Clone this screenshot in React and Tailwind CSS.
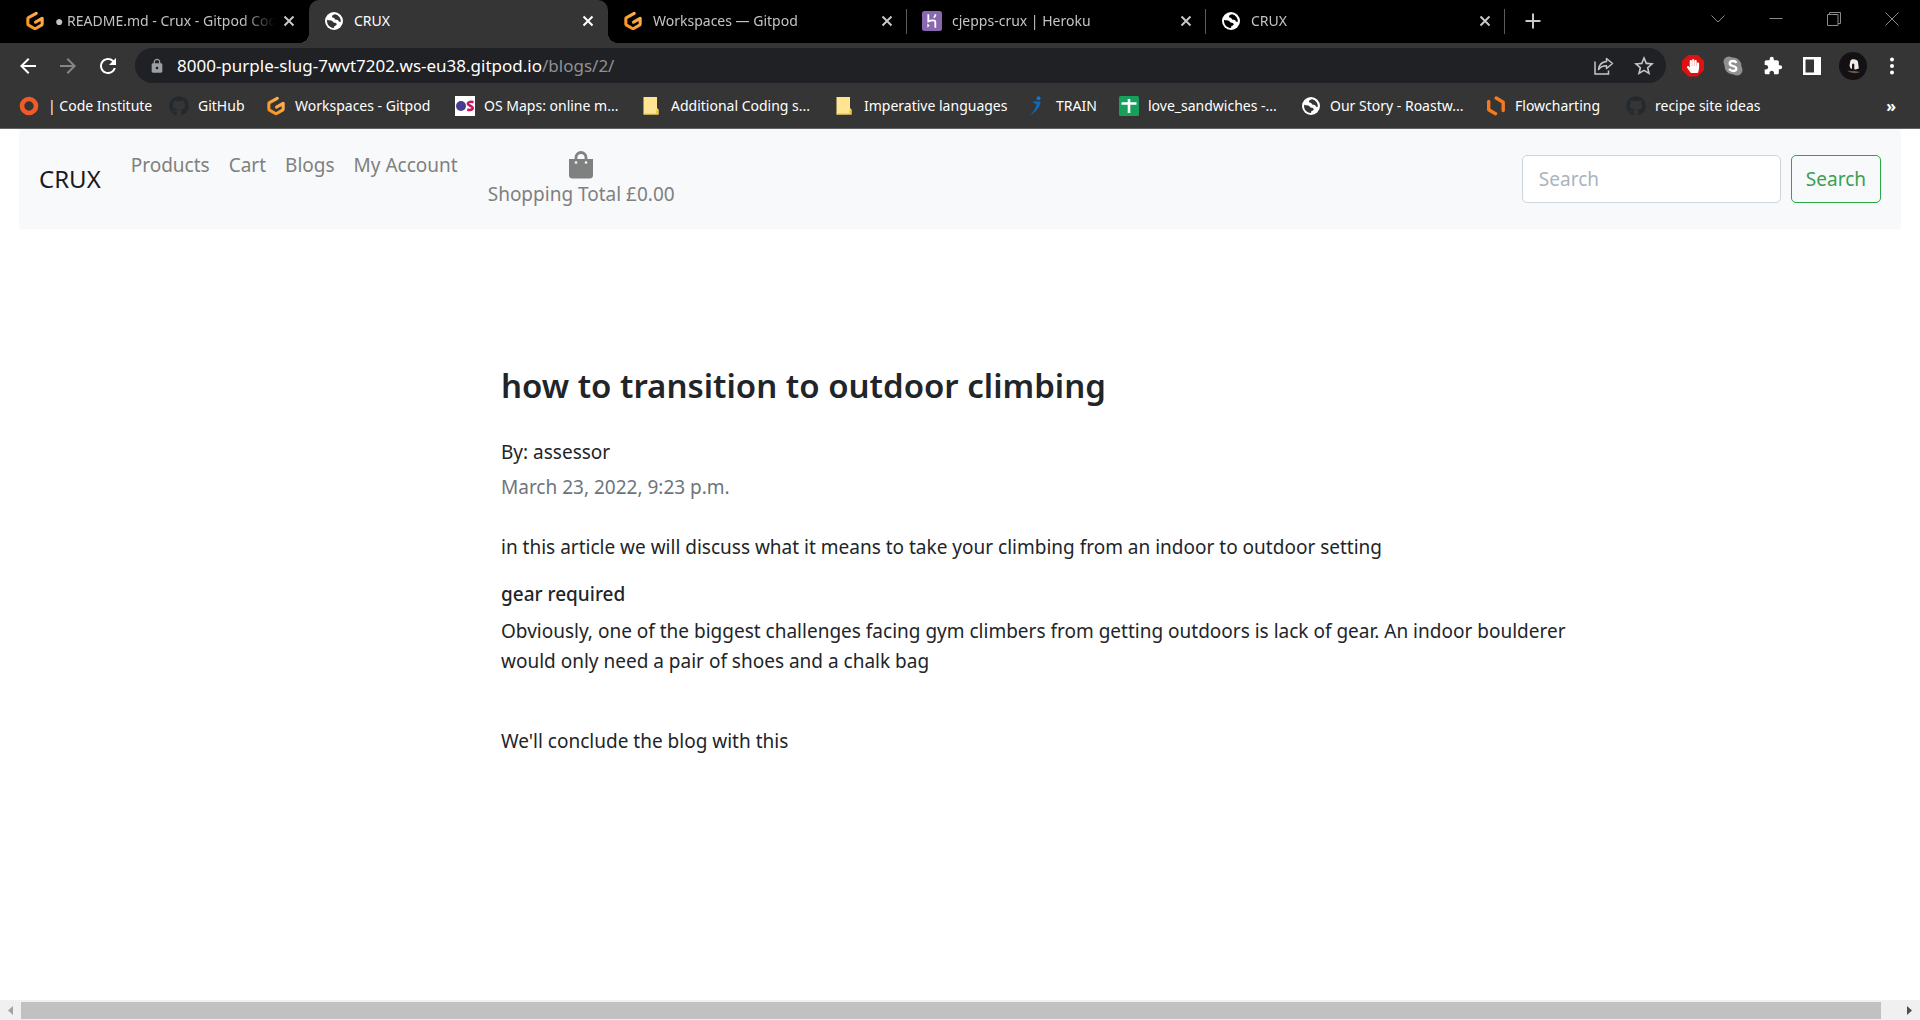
import React from "react";
import { FaGithub, FaHandPaper } from "react-icons/fa";
import { MdLock, MdRefresh, MdExtension, MdStarOutline, MdArrowBack, MdArrowForward } from "react-icons/md";

const Gitpod = () => (
  <svg viewBox="0 0 24 24" className="size-5">
    <defs>
      <linearGradient id="gp" x1="1" y1="0" x2="0" y2="1">
        <stop offset="0" stopColor="#ffb45b" />
        <stop offset="1" stopColor="#f98f1c" />
      </linearGradient>
    </defs>
    <path d="M13.500 2.800 4.200 8a1.600 1.600 0 0 0-.8 1.400v6.200c0 .6.3 1.100.8 1.400l7 4c.5.3 1.100.3 1.600 0l7-4c.5-.3.8-.8.8-1.400V8.800l-8 4.600" fill="none" stroke="url(#gp)" strokeWidth="3.700" strokeLinecap="round" strokeLinejoin="round" />
  </svg>
);

const Globe = ({ sea = "#353535" }) => (
  <svg viewBox="0 0 20 20" className="size-5">
    <circle cx="10" cy="10" r="9" fill="#fff" />
    <path
      d="M11.200 3.300c-1.500.2-3.200.9-3.200 2.200 0 .9.9 1.200 1.700 1.300.9.200.8 1.100 1.500 1.700.8.600 2.100.1 2.900.7.700.5.500 1.500 1.300 1.600h1.500c0-3.400-2-6.500-5.700-7.500zM3.100 8.700c-.5 3.200.9 6.100 3.800 7.600 1.200.6 2.400.7 3.400.5-.4-.7-.2-1.300.5-1.700.8-.5 1.900-.8 1.900-1.800 0-1.200-1.300-1.500-2.200-1.600-1.300-.1-1.600-.9-2.400-1.700-1.200-1.200-3.300-.2-5-1.300z"
      fill={sea}
    />
  </svg>
);

const DarkGlobe = () => <Globe sea="#000" />;

const Heroku = () => (
  <svg viewBox="0 0 20 20" className="size-5">
    <rect width="20" height="20" rx="2.500" fill="#8a68b0" />
    <path d="M6.300 3.300v7c2.200-.9 7-2 7 .7v5.700M13.500 3.300c0 1.300-.6 2.400-1.600 3.400" fill="none" stroke="#fff" strokeWidth="1.800" />
    <path d="M5.400 12.500v4.200l2.300-2.100z" fill="#fff" />
  </svg>
);

const CodeInstitute = () => (
  <svg viewBox="0 0 20 20" className="size-5">
    <circle cx="10" cy="10" r="7" fill="none" stroke="#f05a28" strokeWidth="4.600" />
  </svg>
);

const OsMaps = () => (
  <svg viewBox="0 0 20 20" className="size-5">
    <rect width="20" height="20" fill="#fff" />
    <circle cx="6" cy="10" r="5" fill="#453c90" />
    <path d="M18.500 6.200c-3.500-1.200-6 .2-5.500 2 .5 1.600 4.500 1.600 4.700 3.600.2 1.900-2.700 2.700-5.500 1.700" fill="none" stroke="#c8175a" strokeWidth="2.600" />
  </svg>
);

const Folder = () => (
  <svg viewBox="0 0 20 20" className="size-5">
    <path d="M1.500 1H15v11l1.500 1.500V18.500h-15z" fill="#ffe592" />
    <path d="M14 18.500v-4l1.500-1.500 1 1v4.500z" fill="#f3c83f" />
    <path d="M1.500 17.500h12v1h-12z" fill="#efc64a" />
  </svg>
);

const Train = () => (
  <svg viewBox="0 0 20 20" className="size-5">
    <circle cx="11.500" cy="2.200" r="2" fill="#1475cf" />
    <path d="M5 6c3.500-1 6.500-1 8.500 0-.5 4.500-4 9.500-10.500 13.500 3.500-4 6-7.500 6.500-11.300C8 7.500 6.800 6.900 5 6z" fill="#1268b8" />
  </svg>
);

const Sheets = () => (
  <svg viewBox="0 0 20 20" className="size-5">
    <rect width="20" height="20" rx="1.500" fill="#16a05c" />
    <path d="M2.500 7.500h15M10 3v14" stroke="#fff" strokeWidth="2.600" />
  </svg>
);

const Lucid = () => (
  <svg viewBox="0 0 20 20" className="size-5">
    <path d="M2.700 5.500v8.200l6.800 4M10.200 2l7 4.200v8.300" fill="none" stroke="#f47a20" strokeWidth="3.400" strokeLinejoin="round" strokeLinecap="round" />
  </svg>
);

const Octocat = () => <FaGithub className="size-5 text-[#24292e]" />;

const Close = ({ color = "text-[#c8c8c8]" }) => (
  <svg viewBox="0 0 12 12" className={"size-3 " + color}>
    <path d="m1.500 1.500 9 9m0-9-9 9" stroke="currentColor" strokeWidth="2" />
  </svg>
);

const tabs = [
  { title: "● README.md - Crux - Gitpod Code", Icon: Gitpod },
  { title: "CRUX", Icon: Globe, active: true },
  { title: "Workspaces — Gitpod", Icon: Gitpod, rule: true },
  { title: "cjepps-crux | Heroku", Icon: Heroku, rule: true },
  { title: "CRUX", Icon: DarkGlobe, rule: true },
];

const bookmarks = [
  { label: "| Code Institute", Icon: CodeInstitute, w: "w-[150px]" },
  { label: "GitHub", Icon: Octocat, w: "w-[97px]" },
  { label: "Workspaces - Gitpod", Icon: Gitpod, w: "w-[189px]" },
  { label: "OS Maps: online m...", Icon: OsMaps, w: "w-[187px]" },
  { label: "Additional Coding s...", Icon: Folder, w: "w-[193px]" },
  { label: "Imperative languages", Icon: Folder, w: "w-[192px]" },
  { label: "TRAIN", Icon: Train, w: "w-[92px]" },
  { label: "love_sandwiches -...", Icon: Sheets, w: "w-[182px]" },
  { label: "Our Story - Roastw...", Icon: Globe, w: "w-[185px]" },
  { label: "Flowcharting", Icon: Lucid, w: "w-[140px]" },
  { label: "recipe site ideas", Icon: Octocat, w: "w-[150px]" },
];

function Tab({ title, Icon, active, rule }) {
  return (
    <div
      className={
        "relative flex w-[299px] shrink items-center pr-[14px] pb-[2px] pl-[15px] " +
        (active ? "rounded-t-[10px] bg-[#353535] text-white" : "text-[#c4c4c4]")
      }
    >
      {active && (
        <>
          <span className="absolute bottom-0 -left-[10px] size-[10px] bg-[radial-gradient(circle_at_0_0,#000_10px,#353535_10px)]" />
          <span className="absolute -right-[10px] bottom-0 size-[10px] bg-[radial-gradient(circle_at_100%_0,#000_10px,#353535_10px)]" />
        </>
      )}
      <Icon />
      <span
        className={
          "ml-[10px] h-5 min-w-0 flex-1 overflow-hidden leading-5 whitespace-nowrap " +
          (active ? "" : "[mask-image:linear-gradient(to_right,#000_85%,transparent)]")
        }
      >
        {title}
      </span>
      <button aria-label="Close tab" className="ml-2">
        <Close color={active ? "text-white" : "text-[#c8c8c8]"} />
      </button>
      {rule && <span className="absolute top-[9px] right-0 h-[25px] w-px bg-[#5a5a5a]" />}
    </div>
  );
}

function TabStrip() {
  return (
    <div className="flex h-[43px] bg-black pl-[10px]">
      {tabs.map((t, i) => (
        <Tab key={i} {...t} />
      ))}
      <button aria-label="New tab" className="ml-5 pb-px">
        <svg viewBox="0 0 16 16" className="size-4 text-[#c8c8c8]">
          <path d="M8 .5v15M.5 8h15" stroke="currentColor" strokeWidth="2" />
        </svg>
      </button>
      <div className="ml-auto flex items-start gap-11 pt-3 pr-[21px] text-[#8a8a8a]">
        <button aria-label="Search tabs">
          <svg viewBox="0 0 14 14" className="size-[14px]"><path d="m.5 3.500 6.500 6.500 6.500-6.500" fill="none" stroke="currentColor" /></svg>
        </button>
        <button aria-label="Minimize">
          <svg viewBox="0 0 14 14" className="size-[14px]"><path d="M.5 6.500h13" stroke="currentColor" /></svg>
        </button>
        <button aria-label="Restore">
          <svg viewBox="0 0 14 14" className="size-[14px]"><path d="M.5 2.500h10.500v11H.5zM2.500 2.500v-2h11v11h-2.500" fill="none" stroke="currentColor" /></svg>
        </button>
        <button aria-label="Close">
          <svg viewBox="0 0 14 14" className="size-[14px]"><path d="m.5.5 13 13m0-13-13 13" stroke="currentColor" /></svg>
        </button>
      </div>
    </div>
  );
}

function Toolbar() {
  return (
    <div className="flex h-[45px] items-center pr-5 pl-4 text-white">
      <button aria-label="Back"><MdArrowBack className="size-6" /></button>
      <button aria-label="Forward" className="ml-4 text-[#868686]"><MdArrowForward className="size-6" /></button>
      <button aria-label="Reload" className="ml-4"><MdRefresh className="size-6" /></button>
      <div className="ml-[15px] flex h-[35px] flex-1 items-center rounded-full bg-[#202124] pr-[10px] pl-[14px]">
        <MdLock className="size-4 text-[#9aa0a6]" />
        <p className="ml-3 flex-1 text-[17px] leading-6">
          8000-purple-slug-7wvt7202.ws-eu38.gitpod.io<span className="text-[#8f9194]">/blogs/2/</span>
        </p>
        <button aria-label="Share this page" className="text-[#c4c7c9]">
          <svg viewBox="0 0 20 18" className="h-[18px] w-5" fill="none" stroke="currentColor" strokeWidth="1.500">
            <path d="M1 4.500V17h13.500v-3.500" />
            <path d="M12.500 1.500 18.500 6.500l-6 5V8.700c-4 0-6 1-8 3.800.5-4.500 3-7.500 8-8z" strokeLinejoin="round" />
          </svg>
        </button>
        <button aria-label="Bookmark this page" className="ml-[18px] text-[#c4c7c9]"><MdStarOutline className="size-6" /></button>
      </div>
      <div className="ml-4 flex items-center">
        <button aria-label="AdBlock" className="flex size-[22px] items-center justify-center bg-[#e0120f] [clip-path:polygon(30%_0,70%_0,100%_30%,100%_70%,70%_100%,30%_100%,0_70%,0_30%)]">
          <FaHandPaper className="size-[14px]" />
        </button>
        <button aria-label="Skype" className="ml-[19px]">
          <svg viewBox="0 0 20 20" className="size-5">
            <circle cx="10" cy="10" r="8.500" fill="#909090" />
            <circle cx="6" cy="6" r="5.500" fill="#909090" />
            <circle cx="14" cy="14" r="5.500" fill="#909090" />
            <path d="M13.500 6.800C12.700 5.500 11.400 5 10 5c-2 0-3.300 1-3.300 2.500 0 3.300 6.600 1.800 6.600 4.900 0 1.600-1.400 2.600-3.300 2.600-1.700 0-3-.7-3.800-2.200" fill="none" stroke="#fff" strokeWidth="2.300" />
          </svg>
        </button>
        <button aria-label="Extensions" className="ml-5"><MdExtension className="size-5" /></button>
        <button aria-label="Side panel" className="ml-5">
          <svg viewBox="0 0 18 18" className="size-[18px]">
            <path d="M0 0h18v18H0zM2.500 2.500v13H11v-13z" fill="#fff" fillRule="evenodd" />
          </svg>
        </button>
        <button aria-label="Profile" className="ml-[18px]">
          <svg viewBox="0 0 28 28" className="size-7">
            <circle cx="14" cy="14" r="14" fill="#131114" />
            <path d="M11.500 8.500c1.500-1.800 6-1.500 7.500 1.200l.8 6.800-3.300 1-5-1-1-3z" fill="#f1ece6" />
            <path d="M13 12.500c.5-1.500 2-1.500 2.300 0v5H13z" fill="#1a1615" />
            <path d="M8 18.500c4 1 7-.5 13 1.500-4 2-9 1.500-13-1.500z" fill="#6b5648" />
          </svg>
        </button>
        <button aria-label="Menu" className="ml-[17px]">
          <svg viewBox="0 0 16 18" className="h-[18px] w-4" fill="#fff">
            <circle cx="8" cy="2.500" r="2" /><circle cx="8" cy="9" r="2" /><circle cx="8" cy="15.500" r="2" />
          </svg>
        </button>
      </div>
    </div>
  );
}

function BookmarksBar() {
  return (
    <div className="flex h-[41px] items-center border-b border-[#626262] pb-1 pl-[19px] text-white">
      {bookmarks.map(({ label, Icon, w }, i) => (
        <a key={i} href="#" className={"flex shrink-0 items-center gap-[9px] whitespace-nowrap " + w}>
          <Icon />
          {label}
        </a>
      ))}
      <button aria-label="More bookmarks" className="mr-6 ml-auto text-base font-bold">»</button>
    </div>
  );
}

function Navbar() {
  return (
    <nav className="mx-[19px] flex h-[100px] items-center bg-[#f8f9fa] px-5 text-[19px] leading-[30px] text-[#7f8080]">
      <a href="#" className="text-[24px] text-[#1a1a1a]">CRUX</a>
      <div className="ml-[30px] flex gap-[19px] self-start pt-[21px]">
        <a href="#">Products</a>
        <a href="#">Cart</a>
        <a href="#">Blogs</a>
        <a href="#">My Account</a>
      </div>
      <a href="#" className="ml-[30px] flex flex-col items-center">
        <svg viewBox="0 0 24 28" className="mt-[2px] h-7 w-6">
          <path d="M7 9V6.500a5 5 0 0 1 10 0V9" fill="none" stroke="#7f8080" strokeWidth="2.800" />
          <path d="M0 8h24v16a3.500 3.500 0 0 1-3.500 3.500h-17A3.500 3.500 0 0 1 0 24z" fill="#7f8080" />
          <circle cx="7" cy="11.500" r="1.300" fill="#f8f9fa" />
          <circle cx="17" cy="11.500" r="1.300" fill="#f8f9fa" />
        </svg>
        Shopping Total £0.00
      </a>
      <form className="ml-auto flex gap-[10px]">
        <input
          type="search"
          aria-label="Search"
          placeholder="Search"
          className="h-12 w-[259px] rounded-[5px] border border-[#ced4da] bg-white px-4 placeholder:text-[#a9b4bf]"
        />
        <button type="button" className="h-12 rounded-[5px] border border-[#28a745] px-[14px] text-[#38a052]">Search</button>
      </form>
    </nav>
  );
}

function Article() {
  return (
    <main className="grid flex-1 grid-cols-12 content-start pt-[133px] text-[19px] leading-[30px] text-[#212529]">
      <article className="col-span-7 col-start-4 px-[21px]">
        <h1 className="text-[33px] leading-[48px] font-semibold">how to transition to outdoor climbing</h1>
        <p className="mt-[27px]">By: assessor</p>
        <p className="mt-[5px] text-[#6c757d]">March 23, 2022, 9:23 p.m.</p>
        <p className="mt-[30px]">in this article we will discuss what it means to take your climbing from an indoor to outdoor setting</p>
        <h2 className="mt-[17px] font-medium">gear required</h2>
        <p className="mt-[7px]">
          Obviously, one of the biggest challenges facing gym climbers from getting outdoors is lack of gear. An indoor
          boulderer would only need a pair of shoes and a chalk bag
        </p>
        <p className="mt-[50px]">We'll conclude the blog with this</p>
      </article>
    </main>
  );
}

function ScrollBar() {
  return (
    <div className="flex h-5 items-center bg-[#f0f0f0]">
      <svg viewBox="0 0 21 20" className="h-5 w-[21px]"><path d="M13 6v9l-5-4.500z" fill="#a3a3a3" /></svg>
      <div className="h-[17px] flex-1 bg-[#c1c1c1]" />
      <svg viewBox="0 0 39 20" className="h-5 w-[39px]"><path d="M26 6v9l5-4.500z" fill="#505050" /></svg>
    </div>
  );
}

export default function App() {
  return (
    <div className="flex min-h-screen flex-col bg-white font-['Noto_Sans',sans-serif]">
      <header className="bg-[#353535] text-[14px] leading-5">
        <TabStrip />
        <Toolbar />
        <BookmarksBar />
      </header>
      <Navbar />
      <Article />
      <ScrollBar />
    </div>
  );
}
